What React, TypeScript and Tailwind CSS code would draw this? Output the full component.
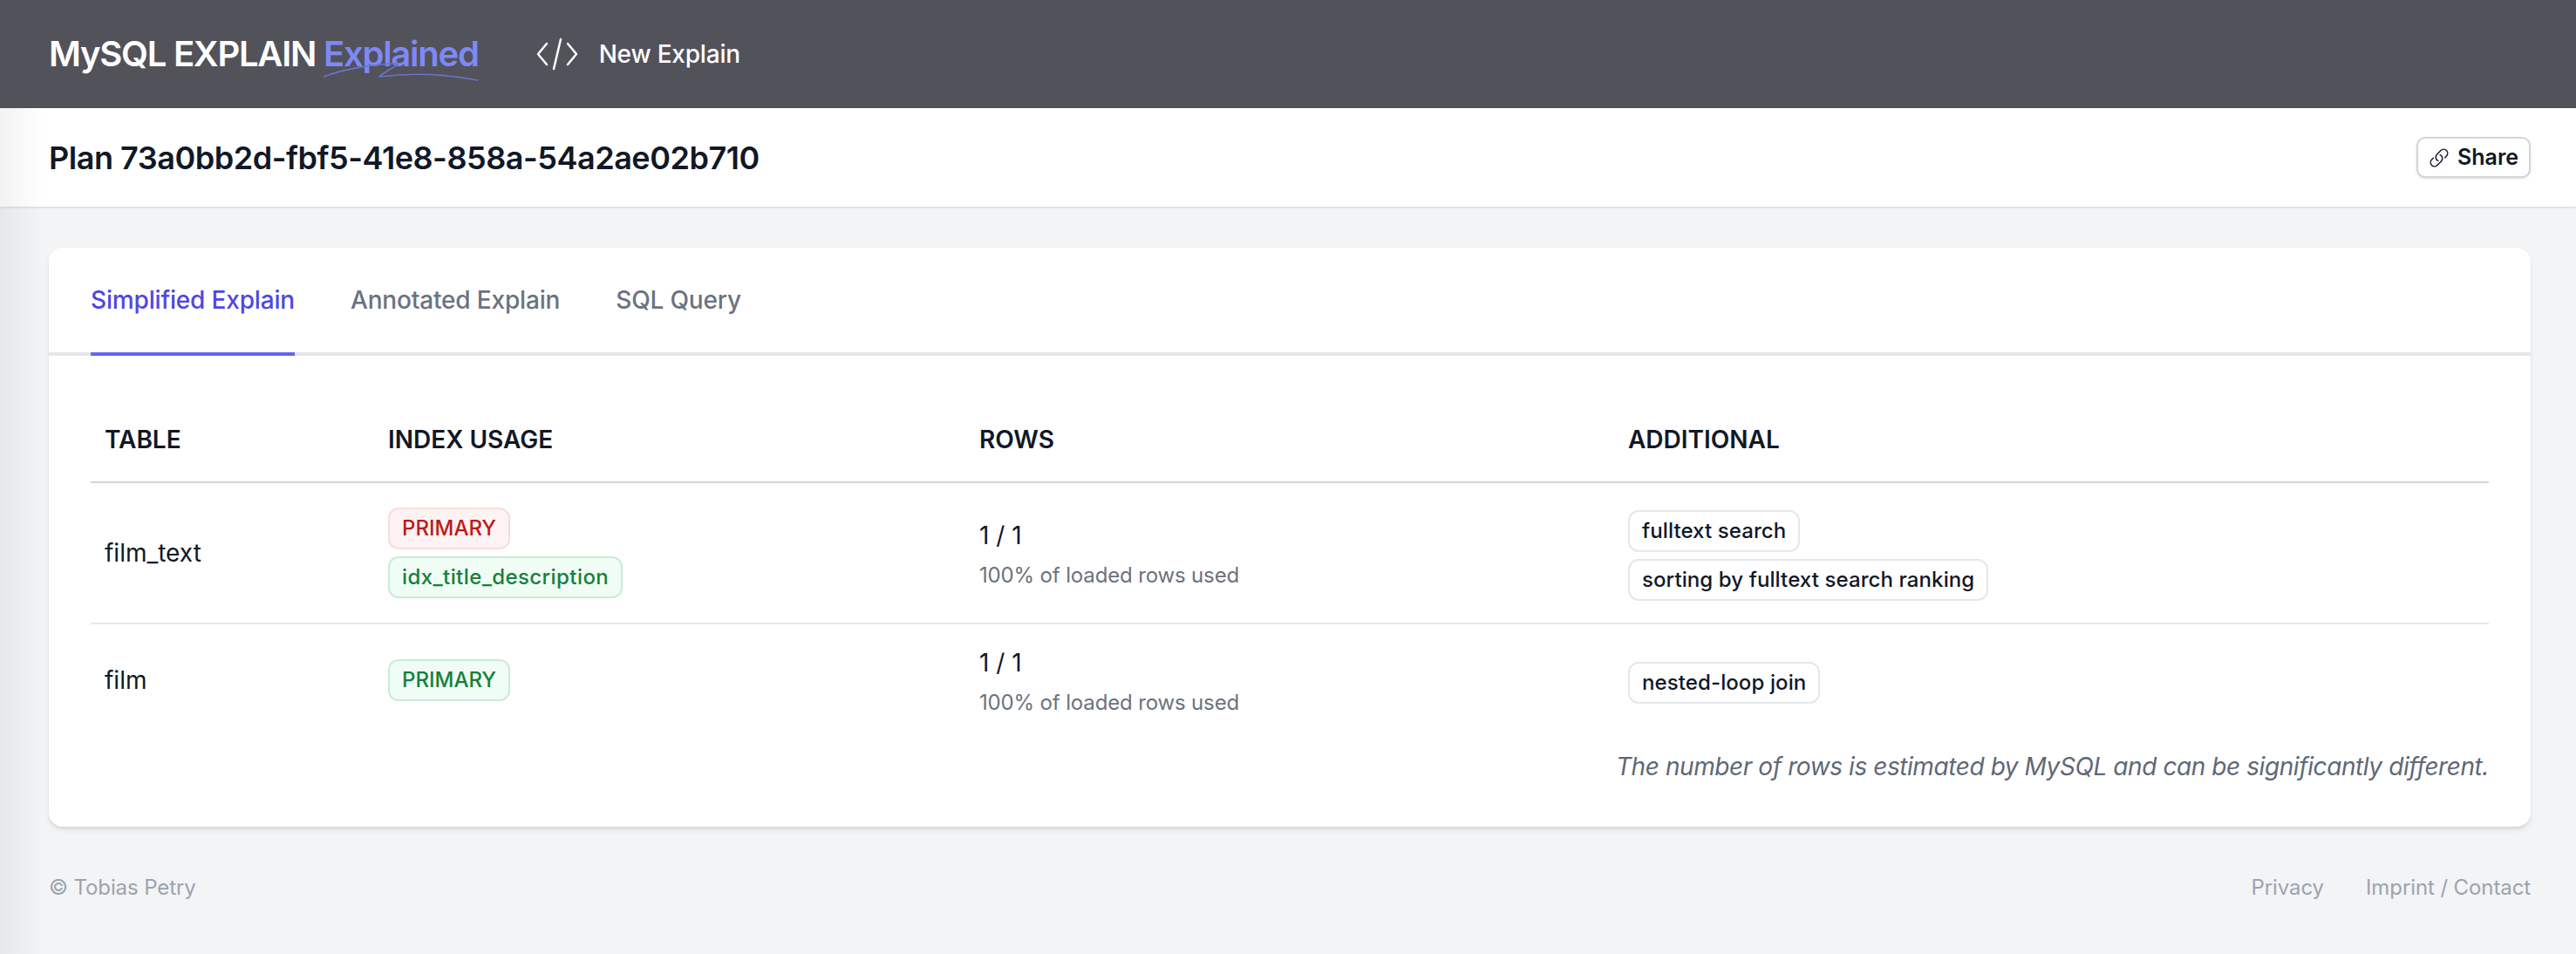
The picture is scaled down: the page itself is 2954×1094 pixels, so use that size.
import { HiOutlineLink } from "react-icons/hi2"

type Pill = { label: string; tone: "red" | "green" | "plain" }

type Row = {
  table: string
  indexes: Pill[]
  rows: string
  additional: string[]
}

const rows: Row[] = [
  {
    table: "film_text",
    indexes: [
      { label: "PRIMARY", tone: "red" },
      { label: "idx_title_description", tone: "green" },
    ],
    rows: "1 / 1",
    additional: ["fulltext search", "sorting by fulltext search ranking"],
  },
  {
    table: "film",
    indexes: [{ label: "PRIMARY", tone: "green" }],
    rows: "1 / 1",
    additional: ["nested-loop join"],
  },
]

function Badge({ label, tone }: Pill) {
  const toneClass =
    tone === "red"
      ? "bg-[#fef2f2] border-[#fbdcdc] text-[#b91c1c]"
      : tone === "green"
        ? "bg-[#f0fdf4] border-[#c8ecd6] text-[#15803d]"
        : "bg-white border-[#e5e7eb] text-[#111827] tracking-[0.1px]"
  const wide = label.includes("_") ? "tracking-[0.42px]" : ""
  return (
    <span
      className={`inline-flex h-[48px] items-center self-start whitespace-nowrap rounded-[12px] border-2 px-[14px] text-[24px] font-medium ${toneClass} ${wide}`}
    >
      {label}
    </span>
  )
}

function CodeIcon() {
  return (
    <svg width="48" height="38" viewBox="0 0 48 38" fill="none" stroke="white" strokeWidth="2.5" strokeLinecap="round" strokeLinejoin="round">
      <path d="M12 7 2 19l10 12" />
      <path d="M36 7l10 12-10 12" />
      <path d="M28 2 20 36" />
    </svg>
  )
}

export default function App() {
  return (
    <div className="relative flex min-h-[1094px] flex-col overflow-hidden bg-[#f3f4f6] font-['Inter',sans-serif] text-[#111827]">
      <div className="pointer-events-none absolute bottom-0 left-0 top-[124px] z-10 w-[50px] bg-gradient-to-r from-black/5 to-transparent" />

      <header className="flex h-[124px] items-center bg-[#52525b] px-[56px] text-white">
        <div className="whitespace-nowrap text-[40px] font-semibold leading-none tracking-[-1.25px]">
          MySQL EXPLAIN{" "}
          <span className="relative text-[#7e89f7]">
            Explained
            <svg className="absolute left-0 top-[33px]" width="178" height="28" viewBox="0 0 178 28" fill="none" stroke="#6a74c9" strokeWidth="1.6" strokeLinecap="round" strokeLinejoin="round">
              <path d="M0 18C24 9 58 3 86 3c-4 4-16 9-22 15 38-5 76-3 113 4" />
            </svg>
          </span>
        </div>
        <div className="ml-[66px] flex items-center gap-[24px] text-[28px] font-medium tracking-[-0.2px]">
          <CodeIcon />
          New Explain
        </div>
      </header>

      <div className="flex h-[113px] items-center justify-between bg-white pl-[56px] pr-[52px] shadow-sm">
        <h1 className="text-[36px] font-semibold tracking-[-0.46px]">Plan 73a0bb2d-fbf5-41e8-858a-54a2ae02b710</h1>
        <button
          type="button"
          className="flex h-[47px] w-[131px] items-center justify-center gap-[9px] rounded-[10px] border-2 border-[#d1d5db] bg-white text-[25px] font-semibold shadow-sm"
        >
          <HiOutlineLink className="h-[24px] w-[24px]" />
          Share
        </button>
      </div>

      <main className="ml-[56px] mr-[52px] mt-[47px] h-[664px] rounded-[16px] bg-white shadow-md">
        <nav className="flex h-[124px] gap-[64px] border-b-4 border-[#e5e7eb] px-[48px] text-[28px] font-medium tracking-[-0.17px]">
          <a className="-mb-[4px] flex items-center border-b-4 border-[#6366f1] text-[#4f46e5]">Simplified Explain</a>
          <a className="-mb-[4px] flex items-center border-b-4 border-transparent text-[#6b7280]">Annotated Explain</a>
          <a className="-mb-[4px] flex items-center border-b-4 border-transparent text-[#6b7280]">SQL Query</a>
        </nav>

        <div className="px-[48px]">
          <table className="w-full table-fixed text-left">
            <thead>
              <tr className="h-[145px] border-b-2 border-[#d1d5db] text-[28px]">
                <th className="w-[325px] px-[16px] pt-[48px] font-semibold">TABLE</th>
                <th className="w-[678px] px-[16px] pt-[48px] font-semibold">INDEX USAGE</th>
                <th className="w-[744px] px-[16px] pt-[48px] font-semibold">ROWS</th>
                <th className="px-[16px] pt-[48px] font-semibold">ADDITIONAL</th>
              </tr>
            </thead>
            <tbody>
              {rows.map((row, i) => (
                <tr key={row.table} className={i === 0 ? "h-[162px] border-b-2 border-[#e5e7eb]" : "h-[129px]"}>
                  <td className="px-[16px] text-[28px]">{row.table}</td>
                  <td className="px-[16px]">
                    <div className="flex flex-col gap-[8px]">
                      {row.indexes.map((p) => (
                        <Badge key={p.label} {...p} />
                      ))}
                    </div>
                  </td>
                  <td className="px-[16px]">
                    <div className="mt-[3px] text-[28px] leading-[40px]">{row.rows}</div>
                    <div className="mt-[8px] text-[24px] leading-[36px] tracking-[-0.15px] text-[#6b7280]">100% of loaded rows used</div>
                  </td>
                  <td className="px-[16px]">
                    <div className="mt-[6px] flex flex-col gap-[8px]">
                      {row.additional.map((label) => (
                        <Badge key={label} label={label} tone="plain" />
                      ))}
                    </div>
                  </td>
                </tr>
              ))}
            </tbody>
          </table>
          <p className="mt-[15px] text-right text-[28px] italic leading-[40px] tracking-[-0.42px] text-[#5f6878]">
            The number of rows is estimated by MySQL and can be significantly different.
          </p>
        </div>
      </main>

      <footer className="mt-[52px] flex items-center justify-between pl-[56px] pr-[52px] text-[24px] leading-[36px] tracking-[-0.1px] text-[#9ca3af]">
        <span>© Tobias Petry</span>
        <div className="flex gap-[48px]">
          <a>Privacy</a>
          <a>Imprint / Contact</a>
        </div>
      </footer>
    </div>
  )
}
